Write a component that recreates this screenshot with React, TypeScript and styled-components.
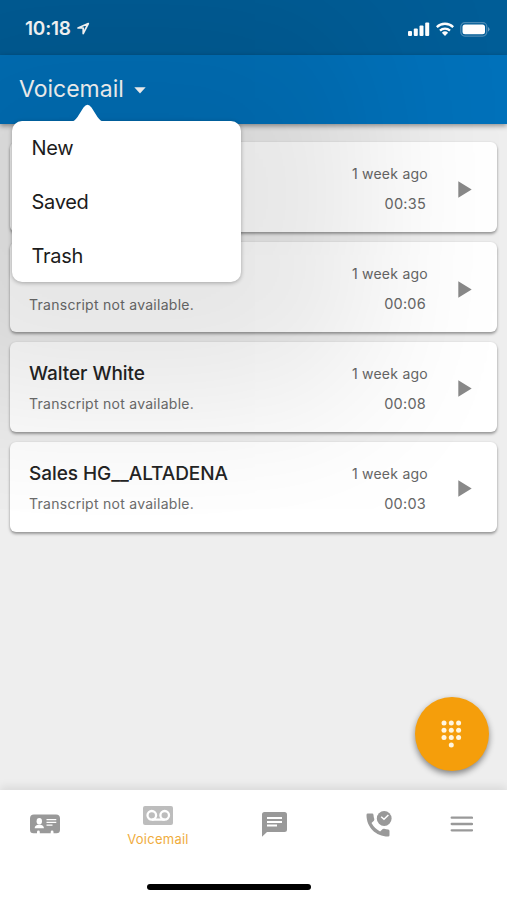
import React from 'react';
import styled, { createGlobalStyle } from 'styled-components';

const GlobalStyle = createGlobalStyle`
  * { box-sizing: border-box; }
  body { margin: 0; background: #ededed; font-family: Inter, "Liberation Sans", sans-serif; }
  svg { display: block; flex: none; }
`;

const Screen = styled.div`
  width: 507px;
  height: 900px;
  display: flex;
  flex-direction: column;
  background: #eeeeee;
  position: relative;
  overflow: hidden;
`;

const StatusBar = styled.div`
  height: 55px;
  flex: none;
  display: flex;
  align-items: center;
  padding: 3px 17px 0 25px;
  background: #005d97;
  color: #ffffff;
`;

const Clock = styled.span`
  font-size: 19px;
  line-height: 22px;
  font-weight: 600;
  letter-spacing: -0.2px;
  width: 50.5px;
  white-space: nowrap;
`;

const StatusIcons = styled.div`
  margin-left: auto;
  display: flex;
  align-items: center;
  gap: 6px;
`;

const Header = styled.header`
  height: 69px;
  flex: none;
  display: flex;
  align-items: center;
  gap: 10px;
  padding: 0 19px 2px;
  background: #0071ba;
  color: #ffffff;
  box-shadow: 0 2px 5px rgba(0, 0, 0, 0.4);
  position: relative;
`;

const Title = styled.h1`
  margin: 0;
  font-size: 23px;
  line-height: 30px;
  font-weight: 400;
  width: 105px;
  white-space: nowrap;
`;

const Caret = styled.svg`
  margin-top: 3px;
`;

const List = styled.main`
  flex: 1;
  display: flex;
  flex-direction: column;
  gap: 9.8px;
  padding: 18.4px 10px 0 9.5px;
`;

const Card = styled.article`
  height: 90px;
  display: flex;
  align-items: center;
  padding: 4px 25px 0 19.5px;
  border-radius: 6px;
  background: #ffffff;
  box-shadow: 0 2px 3px rgba(0, 0, 0, 0.36), 0 0 2px rgba(0, 0, 0, 0.08);
`;

const Message = styled.div`
  flex: 1;
  display: flex;
  flex-direction: column;
  justify-content: flex-end;
  gap: 6px;
  height: 54px;
  margin-top: -1px;
`;

const Caller = styled.h2`
  margin: 0;
  font-size: 19px;
  line-height: 26px;
  font-weight: 500;
  letter-spacing: -0.05px;
  color: #242424;
`;

const Transcript = styled.p`
  margin: 0;
  font-size: 14px;
  line-height: 22px;
  letter-spacing: 0.27px;
  color: #6c6c6c;
`;

const Meta = styled.div`
  display: flex;
  flex-direction: column;
  align-items: flex-end;
  gap: 8px;
  margin-right: 30px;
  font-size: 14px;
  line-height: 22px;
  letter-spacing: 0.25px;
  color: #666666;
`;

const Duration = styled.span`
  font-size: 14.5px;
  padding-right: 2px;
`;

const Menu = styled.nav`
  position: absolute;
  left: 12px;
  top: 121px;
  width: 229px;
  height: 161px;
  padding: 0.5px 19.5px;
  border-radius: 10px;
  background: #ffffff;
  box-shadow: 0 1px 4px rgba(0, 0, 0, 0.3), 0 0 160px 120px rgba(0, 0, 0, 0.105);
`;

const MenuTip = styled.svg`
  position: absolute;
  left: 59px;
  top: -17px;
`;

const MenuItem = styled.div`
  height: 53.8px;
  display: flex;
  align-items: center;
  font-size: 20px;
  letter-spacing: -0.3px;
  color: #1c1c1c;
`;

const DialButton = styled.button`
  position: absolute;
  left: 414.5px;
  top: 697px;
  width: 74px;
  height: 74px;
  border: 0;
  padding: 0;
  border-radius: 50%;
  display: flex;
  align-items: center;
  justify-content: center;
  background: #f59e0b;
  box-shadow: 0 3px 6px rgba(0, 0, 0, 0.45);
`;

const TabBar = styled.footer`
  height: 110px;
  flex: none;
  display: grid;
  grid-template-columns: 90px 136px 97px 111px 55px;
  grid-template-rows: 68px;
  justify-content: start;
  background: #ffffff;
  position: relative;
  box-shadow: 0 -3px 9px rgba(0, 0, 0, 0.09);
`;

const Tab = styled.div<{ $active?: boolean }>`
  display: flex;
  flex-direction: column;
  align-items: center;
  justify-content: ${(p) => (p.$active ? 'flex-start' : 'center')};
  padding-top: ${(p) => (p.$active ? '16px' : '0')};
  color: ${(p) => (p.$active ? '#bdbdbd' : '#999999')};
`;

const TabLabel = styled.span`
  margin-top: 5px;
  font-size: 13px;
  line-height: 18px;
  letter-spacing: 0.25px;
  color: #f0ac3c;
`;

const HomeIndicator = styled.div`
  position: absolute;
  left: 147px;
  bottom: 10px;
  width: 164px;
  height: 6px;
  border-radius: 3px;
  background: #000000;
`;

const messages = [
  { duration: '00:35' },
  { transcript: 'Transcript not available.', duration: '00:06' },
  { caller: 'Walter White', transcript: 'Transcript not available.', duration: '00:08' },
  { caller: 'Sales HG__ALTADENA', transcript: 'Transcript not available.', duration: '00:03' },
];

const LocationIcon = () => (
  <svg width="14" height="15" viewBox="0 0 14 15" fill="none" stroke="currentColor" strokeWidth="1.7" strokeLinejoin="round">
    <path d="M12.300 1.500 2 6h5.200v5.600z" />
  </svg>
);

const SignalIcon = () => (
  <svg width="22" height="15" viewBox="0 0 22 15" fill="currentColor">
    <rect x="0" y="9" width="4" height="5" rx="1" />
    <rect x="5.8" y="6.5" width="4" height="7.5" rx="1" />
    <rect x="11.500" y="3.5" width="4" height="10.5" rx="1" />
    <rect x="17.200" y="0.5" width="4" height="13.5" rx="1" />
  </svg>
);

const WifiIcon = () => (
  <svg width="18" height="15" viewBox="0 0 18 15" fill="none" stroke="currentColor" strokeWidth="2.3">
    <path d="M.8 5.1a11.7 11.7 0 0 1 16.4 0M4 8.600a7.2 7.2 0 0 1 10 0" />
    <path d="M5.9 10.700a4.5 4.5 0 0 1 6.2 0L9 13.900z" fill="currentColor" stroke="none" />
  </svg>
);

const BatteryIcon = () => (
  <svg width="30" height="15" viewBox="0 0 30 15" fill="none">
    <rect x=".8" y=".7" width="26" height="13.4" rx="4" stroke="#4d8bb5" strokeWidth="1.2" />
    <rect x="2.5" y="2.5" width="22.5" height="9.8" rx="2.5" fill="#fff" />
    <path d="M28 5.1q1.5.8 1.5 2.2T28 9.7z" fill="#6b9fc2" />
  </svg>
);

const PlayIcon = () => (
  <svg width="14" height="17" viewBox="0 0 14 17" fill="#898989">
    <path d="M.3.3 13.7 8.5.3 16.7z" />
  </svg>
);

const ContactIcon = () => (
  <svg width="30" height="20" viewBox="0 0 30 20">
    <path d="M4 .5h22a4 4 0 0 1 4 4v11.2a3.5 3.5 0 0 1-3.5 3.5h-3V18q0-1.4-1.4-1.4T20.700 18v1.200H9.800V18q0-1.400-1.400-1.400T7 18v1.200H3.500A3.500 3.500 0 0 1 0 15.700V4.500a4 4 0 0 1 4-4z" fill="currentColor" />
    <ellipse cx="9.300" cy="7.200" rx="2.700" ry="3.200" fill="#fff" />
    <path d="M4.700 14.300q0-2.600 3.300-3.500h2.600q3.300.9 3.300 3.500z" fill="#fff" />
    <path d="M16.500 5.700h9.800M16.500 8.400h9.800M16.500 11.200h6" stroke="#fff" strokeWidth="1.200" />
  </svg>
);

const VoicemailIcon = () => (
  <svg width="30" height="19" viewBox="0 0 30 19" fill="none">
    <rect width="30" height="19" rx="2" fill="currentColor" />
    <g stroke="#fff" strokeWidth="2.300">
      <circle cx="8.800" cy="9.300" r="4.300" />
      <circle cx="21.700" cy="9.300" r="4.300" />
      <path d="M8.800 13.600h12.900" />
    </g>
  </svg>
);

const ChatIcon = () => (
  <svg width="25" height="25" viewBox="0 0 25 25">
    <path d="M2.500 0h20A2.500 2.500 0 0 1 25 2.500v15a2.500 2.500 0 0 1-2.500 2.500H5l-5 4.800V2.500A2.500 2.500 0 0 1 2.500 0z" fill="currentColor" />
    <path d="M5 6.100h15M5 9.900h15M5 13.600h10" stroke="#fff" strokeWidth="2" />
  </svg>
);

const RecentIcon = () => (
  <svg width="26" height="26" viewBox="0 0 26 26" fill="currentColor">
    <path d="M1.800 2.600h4.300q1.300 0 1.400 1.300.1 2.200.8 4.200.2.900-.4 1.600l-2.400 2.400q3 5.500 8.600 8.500l2.600-2.500q.6-.6 1.500-.4 2 .600 4 .800 1.300.1 1.300 1.400v4.300q0 1.200-1.300 1.200C9.600 25.400.5 15.900.5 3.900q0-1.300 1.300-1.300z" />
    <circle cx="18.200" cy="7.500" r="7.400" />
    <path d="m15.200 5.700 2.800 2.600 4.400-4.300" fill="none" stroke="#fff" strokeWidth="1.500" />
  </svg>
);

const MoreIcon = () => (
  <svg width="23" height="18" viewBox="0 0 23 18" stroke="currentColor" strokeWidth="2.300" strokeLinecap="round">
    <path d="M1.700 2.700h20.300M1.700 9h20.300M1.700 15.300h20.300" />
  </svg>
);

const dialDots = [
  [3, 3], [10.300, 3], [17.600, 3],
  [3, 10.300], [10.300, 10.300], [17.600, 10.300],
  [3, 17.600], [10.300, 17.600], [17.600, 17.600],
  [10.300, 25],
];

export default function App() {
  return (
    <>
      <GlobalStyle />
      <Screen>
        <StatusBar>
          <Clock>10:18</Clock>
          <LocationIcon />
          <StatusIcons>
            <SignalIcon />
            <WifiIcon />
            <BatteryIcon />
          </StatusIcons>
        </StatusBar>
        <Header>
          <Title>Voicemail</Title>
          <Caret width="12" height="7" viewBox="0 0 12 7" fill="currentColor">
            <path d="M.3.3h11.400L6 6.500z" />
          </Caret>
        </Header>
        <List>
          {messages.map((m) => (
            <Card key={m.duration}>
              <Message>
                {m.caller && <Caller>{m.caller}</Caller>}
                {m.transcript && <Transcript>{m.transcript}</Transcript>}
              </Message>
              <Meta>
                <span>1 week ago</span>
                <Duration>{m.duration}</Duration>
              </Meta>
              <PlayIcon />
            </Card>
          ))}
        </List>
        <Menu>
          <MenuTip width="33" height="18" viewBox="0 0 33 18" fill="#fff">
            <path d="M0 18c3-.5 4.500-2.500 6.500-5l6-9.500Q16.500-2 20.500 3.500l6 9.500c2 2.500 3.500 4.500 6.500 5z" />
          </MenuTip>
          <MenuItem>New</MenuItem>
          <MenuItem>Saved</MenuItem>
          <MenuItem>Trash</MenuItem>
        </Menu>
        <DialButton aria-label="Dial pad">
          <svg width="21" height="28" viewBox="0 0 21 28" fill="#fff6e0">
            {dialDots.map(([x, y]) => (
              <circle key={`${x}-${y}`} cx={x} cy={y} r="2.500" />
            ))}
          </svg>
        </DialButton>
        <TabBar>
          <Tab><ContactIcon /></Tab>
          <Tab $active>
            <VoicemailIcon />
            <TabLabel>Voicemail</TabLabel>
          </Tab>
          <Tab><ChatIcon /></Tab>
          <Tab><RecentIcon /></Tab>
          <Tab><MoreIcon /></Tab>
          <HomeIndicator />
        </TabBar>
      </Screen>
    </>
  );
}
